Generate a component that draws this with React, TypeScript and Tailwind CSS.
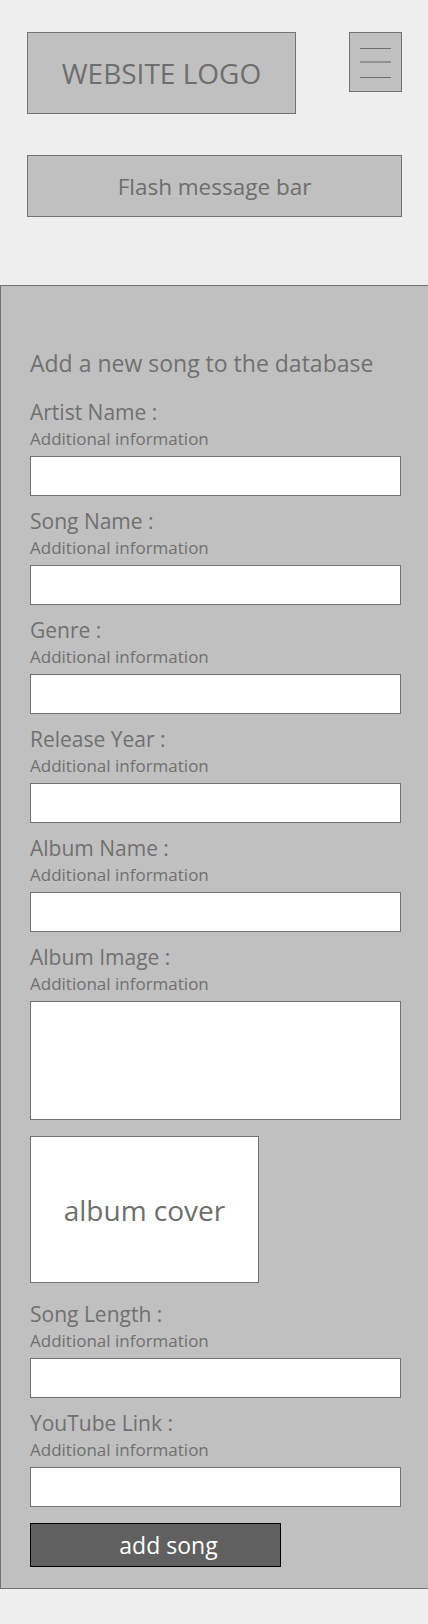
import React from 'react';

const fields = [
    'Artist Name :',
    'Song Name :',
    'Genre :',
    'Release Year :',
    'Album Name :',
];

function Field({ label, tall }: { label: string; tall?: boolean }) {
    return (
        <div className="flex flex-col">
            <div className="text-[21px] leading-[26px] text-[#707070]">{label}</div>
            <div className="mt-[3px] text-[17px] leading-[22px] text-[#707070]">Additional information</div>
            <div
                className={
                    tall
                        ? 'mt-[6px] h-[119px] w-[371px] border border-[#737373] bg-white'
                        : 'mt-[6px] h-[40px] w-[371px] border border-[#737373] bg-white'
                }
            />
        </div>
    );
}

export default function App() {
    return (
        <div
            className="min-h-[1624px] w-[428px] bg-[#eeeeee] pt-[32px]"
            style={{ fontFamily: '"Open Sans", "Noto Sans", sans-serif' }}
        >
            {/* header */}
            <div className="flex items-start justify-between pl-[27px] pr-[26px]">
                <div className="flex h-[82px] w-[269px] items-center justify-center border border-[#737373] bg-[#c0c0c0] text-[28px] text-[#6e6e6e]">
                    WEBSITE LOGO
                </div>
                <div className="h-[60px] w-[53px] border border-[#737373] bg-[#c0c0c0]">
                    <svg width="51" height="58" viewBox="0 0 51 58">
                        <line x1="10" y1="15.5" x2="41" y2="15.5" stroke="#6e6e6e" strokeWidth="1" />
                        <line x1="10" y1="29" x2="41" y2="29" stroke="#909090" strokeWidth="2" />
                        <line x1="10" y1="44.5" x2="41" y2="44.5" stroke="#6e6e6e" strokeWidth="1" />
                    </svg>
                </div>
            </div>

            {/* flash message */}
            <div className="mx-[27px] mt-[41px] flex h-[62px] w-[375px] items-center justify-center border border-[#737373] bg-[#c0c0c0] pt-[2px] text-[22.5px] text-[#6e6e6e]">
                Flash message bar
            </div>

            {/* form panel */}
            <div className="mt-[68px] border-y border-l border-[#737373] bg-[#c0c0c0] pb-[21px] pl-[29px] pt-[62px]">
                <div className="text-[23px] leading-[30px] text-[#707070]">Add a new song to the database</div>
                <div className="mt-[21px] flex flex-col gap-[12px]">
                    {fields.map((f) => (
                        <Field key={f} label={f} />
                    ))}
                    <Field label="Album Image :" tall />
                    <div className="mt-[4px] flex h-[147px] w-[229px] items-center justify-center border border-[#737373] bg-white text-[28px] text-[#6e6e6e]">
                        album cover
                    </div>
                    <div className="mt-[6px]">
                        <Field label="Song Length :" />
                    </div>
                    <Field label="YouTube Link :" />
                    <button className="mt-[4px] flex h-[44px] w-[251px] items-center justify-center border border-black bg-[#606060] pl-[26px] text-[23px] text-white">
                        add song
                    </button>
                </div>
            </div>
        </div>
    );
}
